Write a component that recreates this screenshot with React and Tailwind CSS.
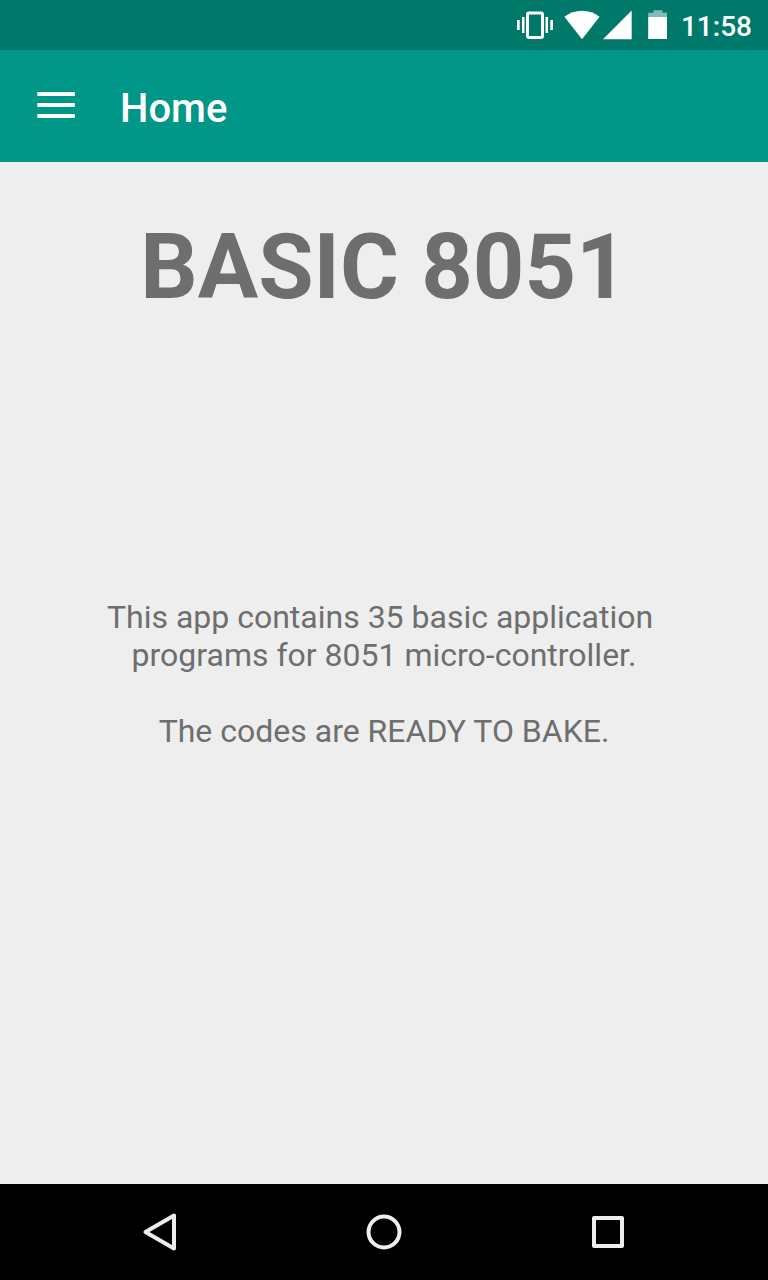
import React from "react";

function StatusBar() {
  return (
    <div className="flex h-[50px] items-center justify-end bg-[#00796b] pr-4 text-white">
      <svg className="mr-[11px]" width="36" height="30" viewBox="0 0 36 30" fill="currentColor" role="img" aria-label="Vibrate">
        <rect x="10.5" y="3" width="15" height="24.5" rx="1.5" fill="none" stroke="currentColor" strokeWidth="3" />
        <rect x="5" y="7" width="2.5" height="16" />
        <rect x="0" y="10" width="2.7" height="10" />
        <rect x="28.5" y="7" width="2.5" height="16" />
        <rect x="33.3" y="10" width="2.7" height="10" />
      </svg>
      <svg className="mr-[3px]" width="36" height="30" viewBox="0 0 36 30" fill="currentColor" role="img" aria-label="Wi-Fi">
        <path d="M18 29.3L.4 6.8C5.500 2.800 11.500 .8 18 .8S30.500 2.800 35.600 6.800Z" />
      </svg>
      <svg className="mr-4" width="29" height="30" viewBox="0 0 29 30" fill="currentColor" role="img" aria-label="Signal">
        <path d="M0 29.300L28.700 .6V29.300Z" />
      </svg>
      <svg className="mr-[13px]" width="20" height="30" viewBox="0 0 20 30" fill="currentColor" role="img" aria-label="Battery">
        <path d="M5.500 .2H14.500V2.800H19V6.800H.2V2.800H5.500Z" opacity=".5" />
        <rect x=".2" y="6.800" width="18.800" height="22.200" />
      </svg>
      <span className="pt-1 text-[28px] leading-8 font-medium">11:58</span>
    </div>
  );
}

function Toolbar() {
  return (
    <header className="flex h-28 items-center bg-[#009688] pl-8 text-white">
      <button type="button" aria-label="Open menu" className="mr-10 flex size-12 items-center justify-center">
        <svg width="48" height="48" viewBox="0 0 48 48" fill="currentColor">
          <path d="M5.300 10H42.800V14H5.300ZM5.300 21H42.800V25H5.300ZM5.300 32H42.800V36H5.300Z" />
        </svg>
      </button>
      <h1 className="pt-1.5 text-[40px] leading-12 font-medium">Home</h1>
    </header>
  );
}

function NavButton({ label, children }) {
  return (
    <button type="button" aria-label={label} className="flex h-24 w-56 items-center justify-center">
      <svg width="40" height="40" viewBox="0 0 40 40" fill="none" stroke="currentColor" strokeWidth="4" strokeLinejoin="round">
        {children}
      </svg>
    </button>
  );
}

export default function App() {
  return (
    <div className="flex min-h-screen flex-col bg-[#eeeeee] font-['Roboto',sans-serif]">
      <StatusBar />
      <Toolbar />
      <main className="flex flex-1 flex-col items-center px-8 pt-[53px] text-center text-[#6e6e6e]">
        <h2 className="text-[90px] leading-[106px] font-bold">BASIC 8051</h2>
        <div className="mt-[277px] text-[32px] leading-[38px]">
          <p>
            This app contains 35 basic application{"\u00a0"}
            <br />
            programs for 8051 micro-controller.
          </p>
          <p className="mt-[38px]">The codes are READY TO BAKE.</p>
        </div>
      </main>
      <nav aria-label="System navigation" className="flex justify-center bg-black text-[#eeeeee]">
        <NavButton label="Back">
          <path d="M34 3.500V36.500L5.500 20Z" />
        </NavButton>
        <NavButton label="Home">
          <circle cx="20" cy="20" r="15.500" />
        </NavButton>
        <NavButton label="Recent apps">
          <rect x="6" y="6" width="28" height="28" />
        </NavButton>
      </nav>
    </div>
  );
}
